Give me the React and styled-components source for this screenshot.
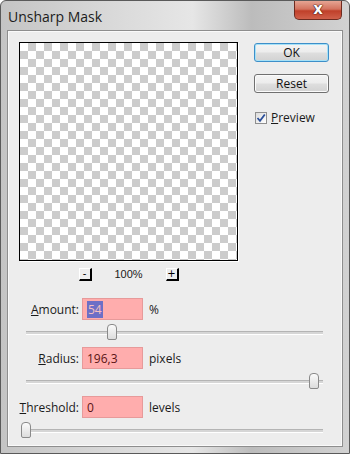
import React from 'react';
import styled, { createGlobalStyle } from 'styled-components';

const GlobalStyle = createGlobalStyle`
  html, body {
    margin: 0;
    padding: 0;
    background: #ffffff;
  }
  body {
    font-family: 'Liberation Sans', Arial, sans-serif;
    font-size: 12px;
    color: #1a1a1a;
  }
`;

const Window = styled.div`
  width: 350px;
  height: 454px;
  box-sizing: border-box;
  border: 1px solid #5a5a5a;
  border-radius: 6px 6px 0 0;
  background: linear-gradient(90deg, #c4c4c4 0%, #d8d8d8 30%, #e6e6e6 55%, #bcbcbc 72%, #d2d2d2 100%);
  display: flex;
  flex-direction: column;
  overflow: hidden;
`;

const TitleBar = styled.div`
  height: 29px;
  display: flex;
  align-items: flex-start;
  justify-content: space-between;
  padding: 0 7px 0 7px;
`;

const Title = styled.span`
  margin-top: 6px;
  font-family: 'Open Sans', 'Liberation Sans', sans-serif;
  font-size: 14px;
  color: #1b1b1b;
`;

const CloseButton = styled.div`
  width: 48px;
  height: 19px;
  box-sizing: border-box;
  border: 1px solid #6e2b20;
  border-top: none;
  border-radius: 0 0 5px 5px;
  background: linear-gradient(180deg, #e6a593 0%, #d3735f 45%, #c0402a 55%, #d0604a 100%);
  display: flex;
  align-items: center;
  justify-content: center;
  color: #ffffff;
  font-family: 'DejaVu Sans', sans-serif;
  font-weight: bold;
  font-size: 15px;
  line-height: 1;
  padding-bottom: 2px;
  text-shadow: 0 0 1px #3a0f08, 0 0 1px #3a0f08, 0 0 1px #3a0f08;
`;

const Client = styled.div`
  flex: 1;
  margin: 0 6px 6px 6px;
  box-sizing: border-box;
  border: 1px solid #8e8e8e;
  box-shadow: inset 0 0 0 1px #fafafa;
  background: #ededed;
  padding: 11px 12px 0 11px;
  display: flex;
  flex-direction: column;
`;

const TopRow = styled.div`
  display: flex;
  gap: 16px;
`;

const PreviewColumn = styled.div`
  display: flex;
  flex-direction: column;
  align-items: center;
`;

const PreviewBox = styled.div`
  width: 219px;
  height: 219px;
  box-sizing: border-box;
  border: 1px solid #000000;
  box-shadow: 1px 1px 0 #ffffff;
  background-color: #ffffff;
  background-image:
    linear-gradient(45deg, #cccccc 25%, transparent 25%, transparent 75%, #cccccc 75%),
    linear-gradient(45deg, #cccccc 25%, transparent 25%, transparent 75%, #cccccc 75%);
  background-size: 16px 16px;
  background-position: 0 0, 8px 8px;
`;

const ZoomRow = styled.div`
  display: flex;
  align-items: center;
  gap: 20px;
  margin-top: 6px;
  height: 14px;
`;

const ZoomButton = styled.div`
  width: 13px;
  height: 13px;
  box-sizing: border-box;
  border-top: 1px solid #ffffff;
  border-left: 1px solid #ffffff;
  border-right: 2px solid #000000;
  border-bottom: 2px solid #000000;
  background: #ededed;
  display: flex;
  align-items: center;
  justify-content: center;
  font-family: 'DejaVu Sans', sans-serif;
  font-size: 10px;
  line-height: 1;
  color: #000;
`;

const ZoomLabel = styled.span`
  width: 34px;
  text-align: center;
  font-size: 11px;
`;

const ButtonColumn = styled.div`
  display: flex;
  flex-direction: column;
  align-items: flex-start;
  padding-top: 1px;
`;

const DialogButton = styled.button`
  width: 75px;
  height: 19px;
  margin-bottom: ${p => p.$gap}px;
  box-sizing: border-box;
  border: 1px solid ${p => (p.$primary ? '#3d8fc9' : '#707070')};
  border-radius: 3px;
  box-shadow: inset 0 0 0 1px ${p => (p.$primary ? '#a6e1f7' : '#fbfbfb')};
  background: linear-gradient(180deg, #f4f4f4 0%, #ececec 48%, #dedede 52%, #d2d2d2 100%);
  font-family: 'Open Sans', 'Liberation Sans', sans-serif;
  font-size: 12px;
  color: #111;
  padding: 0;
  line-height: 16px;
`;

const CheckRow = styled.label`
  display: flex;
  align-items: center;
  gap: 4px;
  margin-left: 1px;
  font-family: 'Open Sans', 'Liberation Sans', sans-serif;
  font-size: 12px;
`;

const CheckBox = styled.span`
  width: 12px;
  height: 12px;
  box-sizing: border-box;
  border: 1px solid #8f8f8f;
  background: linear-gradient(135deg, #dcdcdc, #ffffff);
  display: flex;
  align-items: center;
  justify-content: center;
`;

const Key = styled.span`
  text-decoration: underline;
`;

const ParamRow = styled.div`
  display: flex;
  align-items: center;
  margin-top: ${p => p.$top}px;
  height: 22px;
`;

const Label = styled.span`
  width: 60px;
  text-align: right;
  padding-right: 3px;
  font-family: 'Open Sans', 'Liberation Sans', sans-serif;
  font-size: 12px;
`;

const Field = styled.div`
  width: 61px;
  height: 22px;
  box-sizing: border-box;
  border: 1px solid #e79a9a;
  background: #ffadad;
  display: flex;
  align-items: center;
  padding-left: 4px;
  font-family: 'Open Sans', 'Liberation Sans', sans-serif;
  font-size: 12px;
  color: #5a1414;
`;

const Selected = styled.span`
  background: #6d6fc6;
  color: #f6c0c0;
  padding: 0 1px;
`;

const Unit = styled.span`
  margin-left: 6px;
  font-family: 'Open Sans', 'Liberation Sans', sans-serif;
  font-size: 12px;
`;

const SliderWrap = styled.div`
  position: relative;
  height: 20px;
  margin: 2px 7px 0 7px;
`;

const Track = styled.div`
  position: absolute;
  left: 0;
  right: 0;
  top: 9px;
  height: 2px;
  background: #d6d6d6;
  border-top: 1px solid #b4b4b4;
  border-bottom: 1px solid #ffffff;
`;

const Thumb = styled.div`
  position: absolute;
  top: 2px;
  width: 10px;
  height: 16px;
  margin-left: -5px;
  box-sizing: border-box;
  border: 1px solid #8a8a8a;
  border-radius: 4px 4px 2px 2px;
  background: linear-gradient(180deg, #fbfbfb, #dcdcdc);
`;

const Slider = ({ value }) => (
  <SliderWrap>
    <Track />
    <Thumb style={{ left: `${value}%` }} />
  </SliderWrap>
);

const Check = () => (
  <svg width="10" height="10" viewBox="0 0 10 10">
    <path d="M1.5 5 L4 7.8 L8.8 1.5" fill="none" stroke="#2b4f9a" strokeWidth="1.8" />
  </svg>
);

export default function App() {
  return (
    <>
      <GlobalStyle />
      <Window>
        <TitleBar>
          <Title>Unsharp Mask</Title>
          <CloseButton>x</CloseButton>
        </TitleBar>
        <Client>
          <TopRow>
            <PreviewColumn>
              <PreviewBox />
              <ZoomRow>
                <ZoomButton>-</ZoomButton>
                <ZoomLabel>100%</ZoomLabel>
                <ZoomButton>+</ZoomButton>
              </ZoomRow>
            </PreviewColumn>
            <ButtonColumn>
              <DialogButton $primary $gap={12}>OK</DialogButton>
              <DialogButton $gap={16}>Reset</DialogButton>
              <CheckRow>
                <CheckBox><Check /></CheckBox>
                <span><Key>P</Key>review</span>
              </CheckRow>
            </ButtonColumn>
          </TopRow>

          <ParamRow $top={17}>
            <Label><Key>A</Key>mount:</Label>
            <Field><Selected>54</Selected></Field>
            <Unit>%</Unit>
          </ParamRow>
          <Slider value={29} />

          <ParamRow $top={5}>
            <Label><Key>R</Key>adius:</Label>
            <Field>196,3</Field>
            <Unit>pixels</Unit>
          </ParamRow>
          <Slider value={97} />

          <ParamRow $top={5}>
            <Label><Key>T</Key>hreshold:</Label>
            <Field>0</Field>
            <Unit>levels</Unit>
          </ParamRow>
          <Slider value={0} />
        </Client>
      </Window>
    </>
  );
}
